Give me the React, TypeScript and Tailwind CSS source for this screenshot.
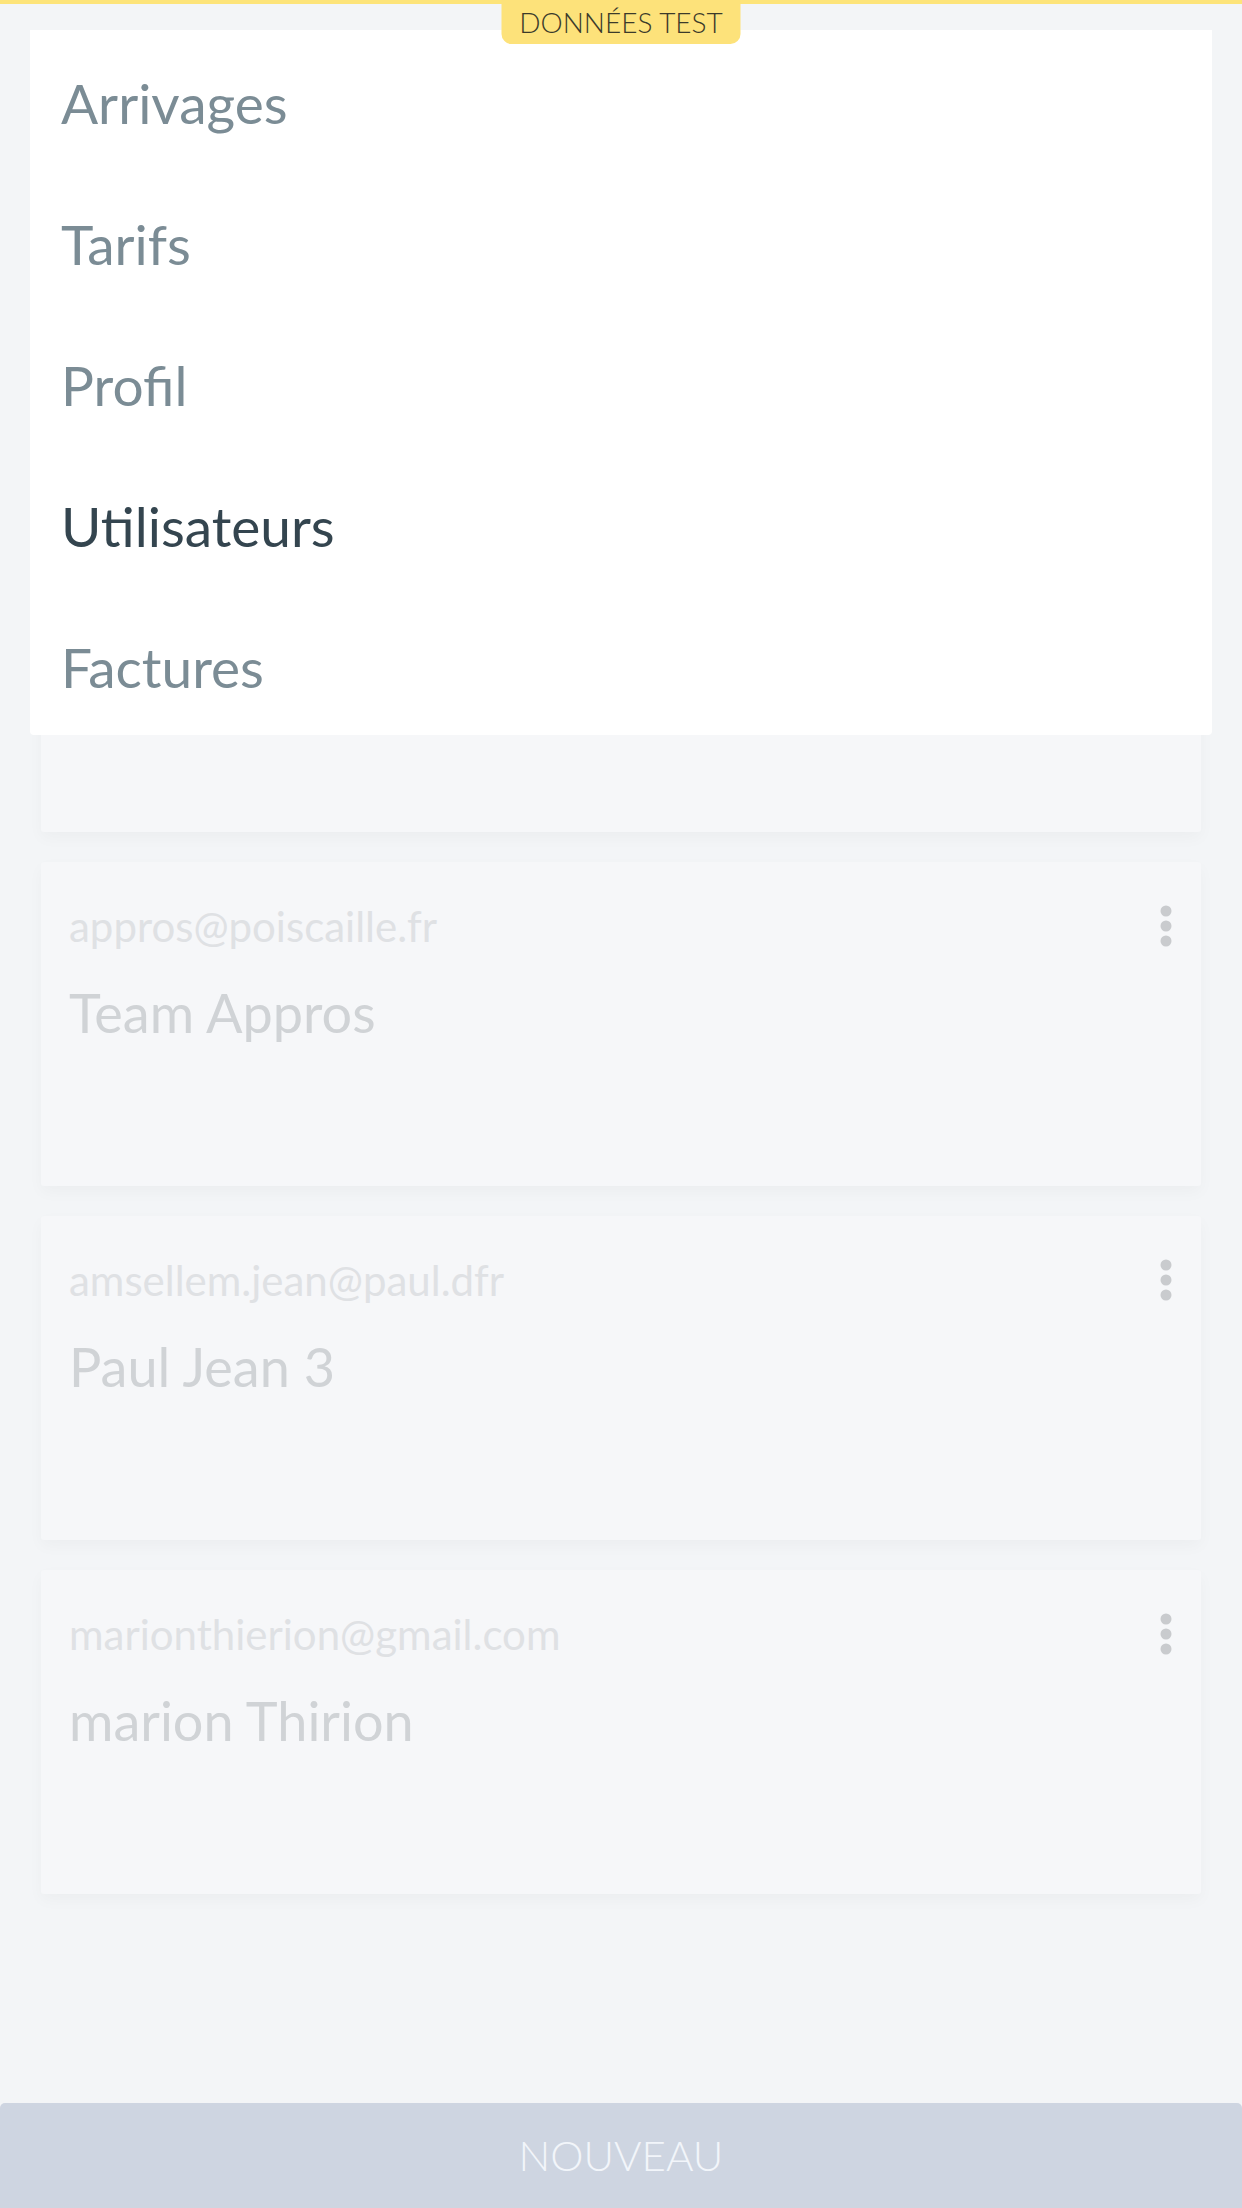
import React from "react";

const menuItems = [
  { label: "Arrivages", active: false },
  { label: "Tarifs", active: false },
  { label: "Profil", active: false },
  { label: "Utilisateurs", active: true },
  { label: "Factures", active: false },
];

const users = [
  { email: "appros@poiscaille.fr", name: "Team Appros" },
  { email: "amsellem.jean@paul.dfr", name: "Paul Jean 3" },
  { email: "marionthierion@gmail.com", name: "marion Thirion" },
];

const cardClass =
  "h-[324px] rounded-[3px] bg-[#f6f7f9] pl-7 pr-[29px] pt-10 shadow-[0_6px_16px_rgba(0,0,0,0.03)]";

const DotsIcon: React.FC = () => (
  <svg width="12" height="42" viewBox="0 0 12 42" className="shrink-0">
    <circle cx="6" cy="6" r="5.5" fill="#c9cbce" />
    <circle cx="6" cy="21" r="5.5" fill="#c9cbce" />
    <circle cx="6" cy="36" r="5.5" fill="#c9cbce" />
  </svg>
);

const UserCard: React.FC<{ email: string; name: string }> = ({ email, name }) => (
  <div className={cardClass}>
    <div className="flex items-center justify-between">
      <span className="text-[42px] leading-[48px] text-[#dfe1e4]">{email}</span>
      <DotsIcon />
    </div>
    <div className="mt-[30px] text-[54px] leading-[65px] text-[#d0d3d6]">{name}</div>
  </div>
);

const App: React.FC = () => {
  return (
    <div
      className="relative flex h-[2208px] w-full flex-col overflow-hidden bg-[#f3f5f7]"
      style={{ fontFamily: "Lato, 'Open Sans', sans-serif" }}
    >
      {/* Page underneath the menu */}

      <div className="h-[508px]" />

      <div className="mx-[41px] flex flex-col gap-[30px]">
        {/* first card sits under the menu */}
        <div className={cardClass} />

        {users.map((u) => (
          <UserCard key={u.email} email={u.email} name={u.name} />
        ))}
      </div>

      <button className="mt-auto h-[105px] w-full rounded-t-[5px] bg-[#ced5e1] text-[42px] font-light text-[#f2f5fa]">
        NOUVEAU
      </button>

      {/* Top test bar + open menu */}

      <div className="absolute inset-x-0 top-0 h-1 bg-[#fde47a]" />

      <div className="absolute left-[30px] right-[30px] top-[30px] rounded-b-[4px] bg-white">
        {menuItems.map((item) => (
          <div
            key={item.label}
            className={
              "flex h-[141px] items-center pl-[31px] pt-[5px] text-[55px] leading-[66px] " +
              (item.active ? "text-[#34454f]" : "text-[#7b8c95]")
            }
          >
            {item.label}
          </div>
        ))}
      </div>

      <div className="absolute left-1/2 top-0 flex h-[44px] w-[239px] -translate-x-1/2 items-center justify-center rounded-b-[10px] bg-[#fde27a] text-[28px] font-light text-[#3b3a2a]">
        DONNÉES TEST
      </div>
    </div>
  );
};

export default App;
